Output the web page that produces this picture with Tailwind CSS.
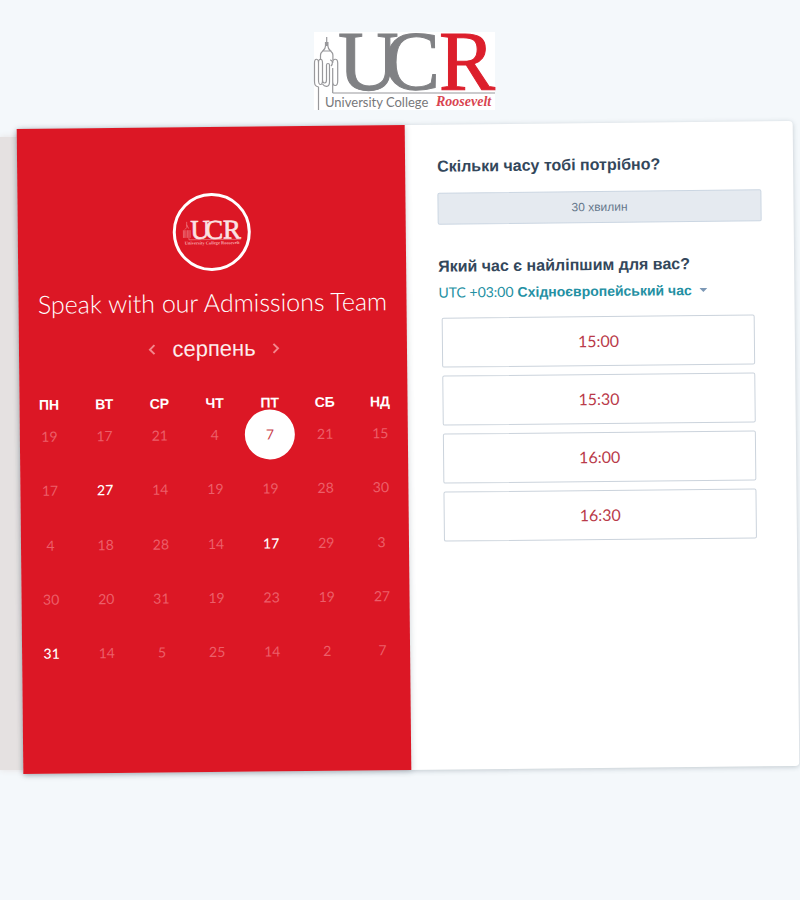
<!DOCTYPE html>
<html lang="uk">
<head>
<meta charset="utf-8">
<meta name="viewport" content="width=device-width, initial-scale=1">
<title>University College Roosevelt</title>
<script src="https://cdn.jsdelivr.net/npm/@tailwindcss/browser@4"></script>
</head>
<body class="min-h-screen overflow-x-hidden bg-[#f4f8fb] font-['Liberation_Sans',Arial,sans-serif] text-[#33475b]">

<header class="flex justify-center pt-8 pl-2">
  <svg class="h-[78px] w-[181px] overflow-visible bg-white" viewBox="0 0 181 78" role="img" aria-label="University College Roosevelt">
    <g fill="none" stroke="#98989b" stroke-width="1.2" stroke-linejoin="round">
      <path d="M12.700 5v9M11.500 10v4c0 5-5 5-5 9v5M13.900 10v4c0 5 5 5 5 9v5M8 19h9.500"/>
      <path d="M4.500 78V55c-4-1-4-3-4-6V31c0-5 4-5 4 0v17M4.500 31c0-5 4-5 4 0v17c0 6-4 6-4 0M8.500 48c0 4 4 4 4 0V33c0-2 3-2 3 0v17c0 6-5 5-7 2M18.700 61V36M18.700 31c0-5 5-5 5 0v18c0 6-5 6-5 0M16 28c3 0 3 4 1 6M18.700 61H181"/>
    </g>
    <g font-family="Liberation Serif, serif" font-size="84" fill="#808184" stroke="#808184">
      <text x="24" y="58">U</text>
      <text x="70" y="58">C</text>
      <text x="125" y="58" fill="#dc1f2c" stroke="#dc1f2c">R</text>
    </g>
    <text x="11" y="75" font-family="Lato, sans-serif" font-size="13" fill="#77787b">University College</text>
    <text x="122" y="74" font-family="Liberation Serif, serif" font-size="14" font-style="italic" font-weight="bold" fill="#d94450">Roosevelt</text>
  </svg>
</header>

<main class="relative pt-[15px] pr-1 pl-5">
  <div class="absolute top-[27px] bottom-0 left-0 w-8 bg-[#e5e1e1] shadow-[0_0_6px_#e5e1e1]"></div>

  <div class="relative grid -rotate-[0.59deg] grid-cols-2 rounded-sm bg-white shadow-[0_1px_5px_rgba(45,62,80,0.25)]">
    <section class="flex flex-col items-center bg-[#dc1725] pt-[66px] pb-[93px] text-white shadow-[0_1px_6px_rgba(45,62,80,0.25)]">
      <div class="flex size-[78px] items-center justify-center rounded-full border-3 border-white">
        <svg class="h-[25px] w-[58px] overflow-visible" viewBox="0 0 181 78" aria-hidden="true">
          <g fill="none" stroke="#f08a90" stroke-width="2">
            <path d="M12.500 5v18l-6 6M12.500 14l6 12M2 31v24M6 31v24M10 31v24M15 31v24M19 31v30h162M23 31v24"/>
          </g>
          <g font-family="Liberation Serif, serif" font-size="84" fill="#fbe3e4" stroke="#fbe3e4" stroke-width="2">
            <text x="24" y="58">U</text>
            <text x="70" y="58">C</text>
            <text x="125" y="58">R</text>
          </g>
          <text x="6" y="76" font-family="Liberation Serif, serif" font-size="14" font-weight="bold" fill="#f6a9ad">University College Roosevelt</text>
        </svg>
      </div>

      <h1 class="mt-[15px] font-['Lato',sans-serif] text-[25px] leading-8 font-light whitespace-nowrap text-white">Speak with our Admissions Team</h1>

      <div class="mt-[15px] flex h-8 items-center gap-4 pl-0.5">
        <button type="button" aria-label="Попередній місяць" class="text-[#f3868c]">
          <svg class="h-3 w-2" viewBox="0 0 8 12" fill="none" stroke="currentColor" stroke-width="2"><path d="M6.500 1.500 2 6l4.500 4.500"/></svg>
        </button>
        <h2 class="text-[22px] leading-8 text-[#fdecec]">серпень</h2>
        <button type="button" aria-label="Наступний місяць" class="text-[#f3868c]">
          <svg class="h-3 w-2" viewBox="0 0 8 12" fill="none" stroke="currentColor" stroke-width="2"><path d="M1.500 1.500 6 6l-4.500 4.500"/></svg>
        </button>
      </div>

      <div class="mt-[33px] w-full pl-0.5">
      <table class="w-full table-fixed border-separate border-spacing-0 text-center">
        <thead>
          <tr class="text-sm leading-[10px] font-bold">
            <th class="p-0">ПН</th><th class="p-0">ВТ</th><th class="p-0">СР</th><th class="p-0">ЧТ</th><th class="p-0">ПТ</th><th class="p-0">СБ</th><th class="p-0">НД</th>
          </tr>
        </thead>
        <tbody class="font-['Lato',sans-serif] text-sm text-[#ec5f69]">
          <tr class="h-[54px]">
            <td class="p-0">19</td><td class="p-0">17</td><td class="p-0">21</td><td class="p-0">4</td>
            <td class="p-0"><button type="button" aria-pressed="true" class="mx-auto flex size-[50px] items-center justify-center rounded-full bg-white text-[#c9404b]">7</button></td>
            <td class="p-0">21</td><td class="p-0">15</td>
          </tr>
          <tr class="h-[54px]">
            <td class="p-0">17</td><td class="p-0"><button type="button" class="font-medium text-white">27</button></td><td class="p-0">14</td><td class="p-0">19</td><td class="p-0">19</td><td class="p-0">28</td><td class="p-0">30</td>
          </tr>
          <tr class="h-[55px]">
            <td class="p-0">4</td><td class="p-0">18</td><td class="p-0">28</td><td class="p-0">14</td><td class="p-0"><button type="button" class="font-medium text-white">17</button></td><td class="p-0">29</td><td class="p-0">3</td>
          </tr>
          <tr class="h-[54px]">
            <td class="p-0">30</td><td class="p-0">20</td><td class="p-0">31</td><td class="p-0">19</td><td class="p-0">23</td><td class="p-0">19</td><td class="p-0">27</td>
          </tr>
          <tr class="h-[54px]">
            <td class="p-0"><button type="button" class="font-medium text-white">31</button></td><td class="p-0">14</td><td class="p-0">5</td><td class="p-0">25</td><td class="p-0">14</td><td class="p-0">2</td><td class="p-0">7</td>
          </tr>
        </tbody>
      </table>
      </div>
    </section>

    <section class="px-8 pt-[30px]">
      <h2 class="text-base leading-6 font-bold">Скільки часу тобі потрібно?</h2>
      <button type="button" class="mt-[14px] h-8 w-full rounded-xs border border-[#cbd6e2] bg-[#e5eaf0] text-xs text-[#66788c]">30 хвилин</button>

      <h2 class="mt-[30px] text-base leading-6 font-bold">Який час є найліпшим для вас?</h2>
      <button type="button" class="mt-0.5 flex h-6 items-center gap-1 text-[#2390a3]">
        <span class="font-['Lato',sans-serif] text-sm leading-5">UTC +03:00</span>
        <span class="text-sm leading-5 font-bold">Східноєвропейський час</span>
        <svg class="ml-1 h-1 w-2" viewBox="0 0 8 4" fill="#7c98b6" aria-hidden="true"><path d="M0 0h8L4 4z"/></svg>
      </button>

      <div class="mt-[13px] mr-2 ml-[3px] flex flex-col gap-2 font-['Lato',sans-serif] text-base text-[#b93a49]">
        <button type="button" class="h-[50px] rounded-xs border border-[#cbd3dc] bg-white">15:00</button>
        <button type="button" class="h-[50px] rounded-xs border border-[#cbd3dc] bg-white">15:30</button>
        <button type="button" class="h-[50px] rounded-xs border border-[#cbd3dc] bg-white">16:00</button>
        <button type="button" class="h-[50px] rounded-xs border border-[#cbd3dc] bg-white">16:30</button>
      </div>
    </section>
  </div>
</main>
</body>
</html>
